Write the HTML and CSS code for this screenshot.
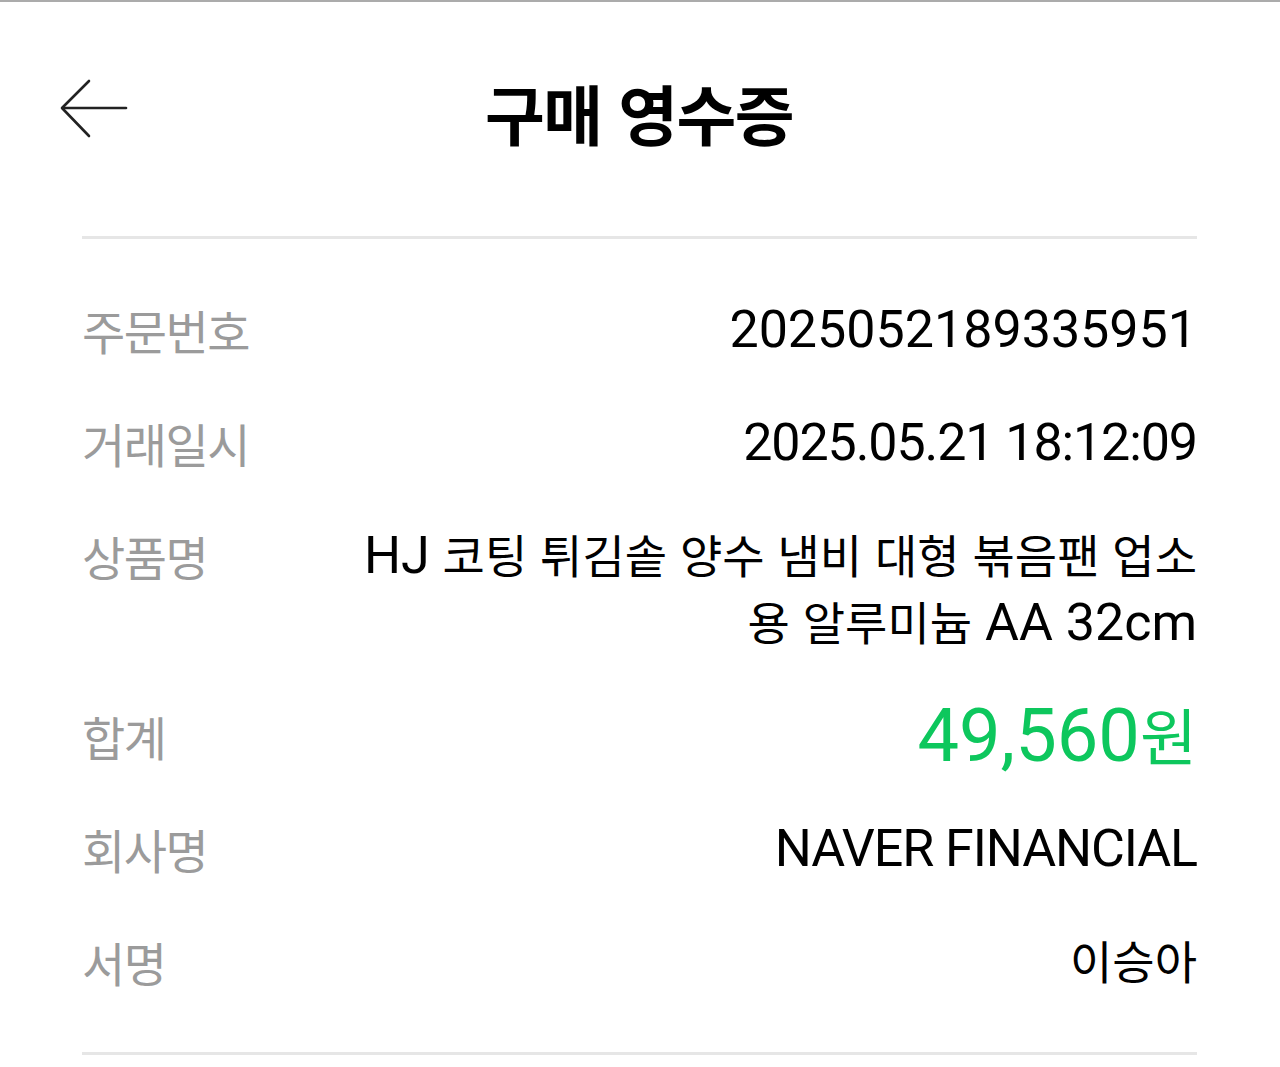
FILE: index.html
```html
<!DOCTYPE html>
<html lang="ko">
<head>
<meta charset="utf-8">
<title>구매 영수증</title>
<link rel="stylesheet" href="styles.css">
</head>
<body>
<div class="page">
  <header class="header">
    <button class="back" aria-label="뒤로">
      <svg width="70" height="60" viewBox="58 78 70 60" fill="none" stroke="#222" stroke-width="2.6" stroke-linecap="round" stroke-linejoin="round">
        <path d="M126 108 H63"/>
        <path d="M89 81 L62 108 L89 136"/>
      </svg>
    </button>
    <h1 class="title">구매 영수증</h1>
    <span class="spacer"></span>
  </header>

  <section class="receipt">
    <div class="row">
      <span class="label">주문번호</span>
      <span class="value">2025052189335951</span>
    </div>
    <div class="row">
      <span class="label">거래일시</span>
      <span class="value tight">2025.05.21 18:12:09</span>
    </div>
    <div class="row">
      <span class="label">상품명</span>
      <span class="value name">HJ <span class="ko">코팅 튀김솥 양수 냄비 대형 볶음팬 업소</span><span class="ko">용 알루미늄</span> AA 32cm</span>
    </div>
    <div class="row">
      <span class="label">합계</span>
      <span class="value total">49,560<span class="ko">원</span></span>
    </div>
    <div class="row">
      <span class="label">회사명</span>
      <span class="value tight">NAVER FINANCIAL</span>
    </div>
    <div class="row">
      <span class="label">서명</span>
      <span class="value"><span class="ko">이승아</span></span>
    </div>
  </section>
</div>
</body>
</html>
```

FILE: styles.css
```css
* { box-sizing: border-box; }

html, body {
  margin: 0;
  padding: 0;
  background: #ffffff;
}

body {
  font-family: "Noto Sans CJK KR", "Noto Sans", sans-serif;
  color: #000;
}

.page {
  border-top: 2px solid #ababab;
  min-height: 1067px;
}

.header {
  height: 234px;
  display: grid;
  grid-template-columns: 1fr auto 1fr;
  align-items: center;
  padding: 0 60px 14px 58px;
}

.back {
  justify-self: start;
  background: none;
  border: 0;
  padding: 0;
  margin: 0 0 8px 0;
  display: flex;
  cursor: pointer;
}

.title {
  margin: 0;
  font-family: "Noto Sans CJK KR", sans-serif;
  font-weight: 700;
  font-size: 65px;
  line-height: 80px;
  letter-spacing: -1.5px;
  color: #000;
}

.receipt {
  margin: 0 83px 0 82px;
  border-top: 3px solid #e6e6e6;
  border-bottom: 3px solid #e6e6e6;
  padding: 57px 0 57px;
  display: flex;
  flex-direction: column;
  gap: 46px;
}

.row {
  display: flex;
  justify-content: space-between;
  align-items: flex-start;
  gap: 40px;
}

.label {
  flex-shrink: 0;
  font-family: "Noto Sans CJK KR", sans-serif;
  font-weight: 400;
  font-size: 47px;
  line-height: 67px;
  letter-spacing: -1.5px;
  color: #9b9b9b;
}

.value {
  font-family: Roboto, "Noto Sans CJK KR", sans-serif;
  font-size: 52px;
  line-height: 67px;
  text-align: right;
  color: #000;
}

.value .ko {
  font-family: "Noto Sans CJK KR", sans-serif;
  font-size: 46px;
  line-height: 40px;
  letter-spacing: 0;
}

.tight {
  letter-spacing: -1.1px;
}

.name {
  max-width: 840px;
}

.total {
  font-size: 74px;
  color: #0dc75d;
}

.total .ko {
  font-size: 62px;
  line-height: 40px;
}
```
